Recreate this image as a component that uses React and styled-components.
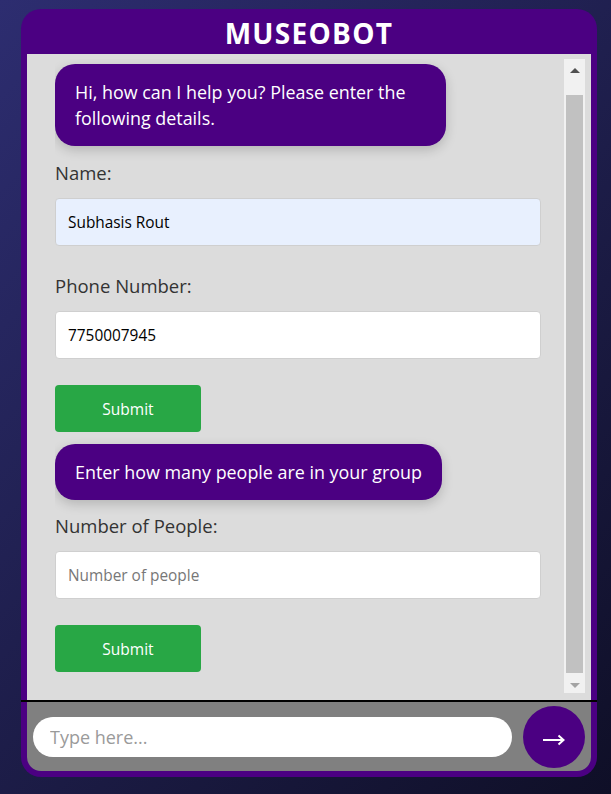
// Museobot chat window
import React from "react";
import styled, { createGlobalStyle } from "styled-components";

const GlobalStyle = createGlobalStyle`
  html, body {
    margin: 0;
    padding: 0;
  }
  body {
    min-height: 100vh;
    background: linear-gradient(135deg, #2d2d70 0%, #0f0f27 100%);
    font-family: "Open Sans", "Noto Sans", sans-serif;
  }
`;

const Page = styled.div`
  padding: 9px 0 17px 21px;
`;

const ChatWindow = styled.div`
  width: 576px;
  height: 768px;
  box-sizing: border-box;
  background-color: #4b0082;
  border-radius: 20px;
  padding: 0 6px 6px;
  display: flex;
  flex-direction: column;
`;

const Header = styled.div`
  height: 45px;
  display: flex;
  align-items: center;
  justify-content: center;

  h1 {
    margin: 0;
    color: #fff;
    font-size: 28px;
    font-weight: 700;
    letter-spacing: 1.3px;
    line-height: 1;
    padding-top: 2px;
  }
`;

const ChatBody = styled.div`
  flex: 1;
  min-height: 0;
  background-color: #dcdcdc;
  display: flex;
  padding: 5px 6px 7px 28px;
`;

const Messages = styled.div`
  flex: 1;
  min-width: 0;
  overflow: hidden;
  padding: 5px 23px 0 0;
`;

const ScrollTrack = styled.div`
  width: 21px;
  background-color: #f1f1f1;
  display: flex;
  flex-direction: column;
`;

const ScrollArrow = styled.div`
  height: 17px;
  display: flex;
  align-items: center;
  justify-content: center;

  &::before {
    content: "";
    width: 0;
    height: 0;
    border-left: 5px solid transparent;
    border-right: 5px solid transparent;
    ${(p) =>
      p.$down
        ? `border-top: 5px solid #a3a3a3; margin-top: 1px;`
        : `border-bottom: 5px solid #505050; margin-top: 6px;`}
  }
`;

const ScrollThumb = styled.div`
  flex: 1;
  margin: 19px 2px 3px;
  background-color: #c1c1c1;
`;

const Bubble = styled.div`
  box-sizing: border-box;
  width: fit-content;
  max-width: 80.5%;
  background-color: #4b0082;
  color: #fff;
  border-radius: 20px;
  padding: 15px 20px;
  font-size: 17.9px;
  line-height: 26px;
  box-shadow: 0 4px 12px rgba(0, 0, 0, 0.18);
  margin-bottom: ${(p) => p.$gap || 13}px;
`;

const Label = styled.label`
  display: block;
  color: #333;
  font-size: 18.5px;
  line-height: 27px;
  margin-bottom: 12px;
`;

const Field = styled.input`
  display: block;
  width: 100%;
  height: 48px;
  box-sizing: border-box;
  border: 1px solid #cfcfcf;
  border-radius: 4px;
  padding: 0 12px;
  margin: 0 0 26px;
  font-family: inherit;
  font-size: 15.4px;
  color: #000;
  background-color: ${(p) => (p.$filled ? "#e8f0fe" : "#fff")};
  outline: none;

  &::placeholder {
    color: #777;
  }
`;

const SubmitButton = styled.button`
  display: block;
  width: 146px;
  height: 47px;
  border: none;
  border-radius: 4px;
  background-color: #28a745;
  color: #fff;
  font-family: inherit;
  font-size: 15.5px;
  margin-bottom: 12px;
  cursor: pointer;
`;

const Divider = styled.div`
  height: 2px;
  margin: 0 -6px;
  background-color: #000;
`;

const Footer = styled.div`
  height: 69px;
  background-color: #808080;
  border-radius: 0 0 14px 14px;
  display: flex;
  align-items: center;
  padding: 0 6px;
  gap: 11px;
`;

const TypeInput = styled.input`
  flex: 1;
  height: 40px;
  box-sizing: border-box;
  border: none;
  border-radius: 20px;
  padding: 0 17px;
  font-family: inherit;
  font-size: 18px;
  background-color: #fff;
  outline: none;

  &::placeholder {
    color: #9a9a9a;
  }
`;

const SendButton = styled.button`
  width: 62px;
  height: 62px;
  flex-shrink: 0;
  border: none;
  border-radius: 50%;
  background-color: #4b0082;
  display: flex;
  align-items: center;
  justify-content: center;
  padding: 6px 0 0;
  cursor: pointer;
`;

const ArrowIcon = () => (
  <svg width="22" height="12" viewBox="0 0 22 12" fill="none">
    <path d="M0 6h20.5" stroke="#fff" strokeWidth="2" />
    <path d="M15.5 1.5L20.5 6l-5 4.5" stroke="#fff" strokeWidth="2" />
  </svg>
);

const App = () => {
  return (
    <>
      <GlobalStyle />
      <Page>
        <ChatWindow>
          <Header>
            <h1>MUSEOBOT</h1>
          </Header>
          <ChatBody>
            <Messages>
              <Bubble>Hi, how can I help you? Please enter the following details.</Bubble>
              <Label>Name:</Label>
              <Field $filled defaultValue="Subhasis Rout" />
              <Label>Phone Number:</Label>
              <Field defaultValue="7750007945" />
              <SubmitButton>Submit</SubmitButton>
              <Bubble $gap={12}>Enter how many people are in your group</Bubble>
              <Label>Number of People:</Label>
              <Field placeholder="Number of people" />
              <SubmitButton>Submit</SubmitButton>
            </Messages>
            <ScrollTrack>
              <ScrollArrow />
              <ScrollThumb />
              <ScrollArrow $down />
            </ScrollTrack>
          </ChatBody>
          <Divider />
          <Footer>
            <TypeInput placeholder="Type here..." />
            <SendButton>
              <ArrowIcon />
            </SendButton>
          </Footer>
        </ChatWindow>
      </Page>
    </>
  );
};

export default App;
